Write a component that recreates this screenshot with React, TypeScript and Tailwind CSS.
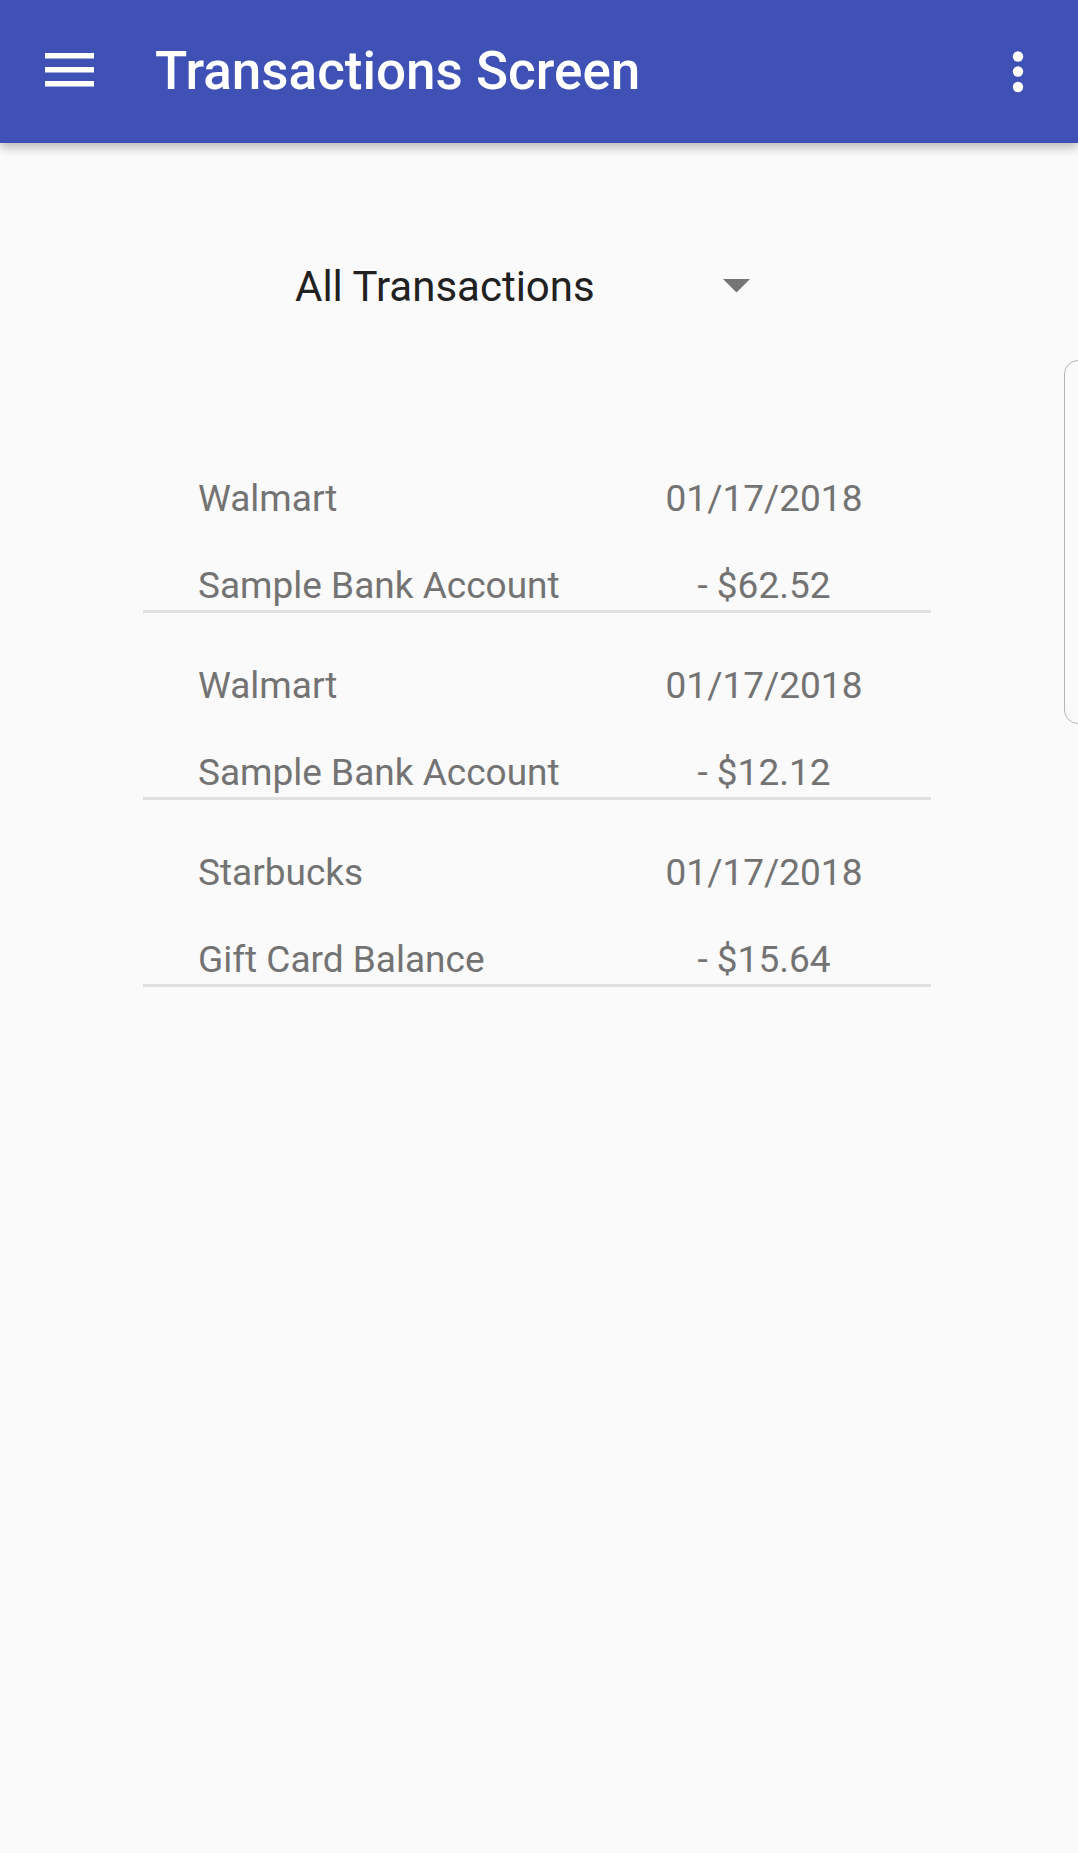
import React from 'react'

type Txn = {
  merchant: string
  date: string
  account: string
  amount: string
}

const transactions: Txn[] = [
  { merchant: 'Walmart', date: '01/17/2018', account: 'Sample Bank Account', amount: '- $62.52' },
  { merchant: 'Walmart', date: '01/17/2018', account: 'Sample Bank Account', amount: '- $12.12' },
  { merchant: 'Starbucks', date: '01/17/2018', account: 'Gift Card Balance', amount: '- $15.64' },
]

function MenuIcon() {
  return (
    <svg width="50" height="34" viewBox="0 0 50 34" className="block">
      <rect x="0" y="0" width="49" height="5.5" fill="#fff" />
      <rect x="0" y="14" width="49" height="5.5" fill="#fff" />
      <rect x="0" y="28" width="49" height="5.5" fill="#fff" />
    </svg>
  )
}

function MoreIcon() {
  return (
    <svg width="12" height="42" viewBox="0 0 12 42" className="block">
      <circle cx="6" cy="5.5" r="5.2" fill="#fff" />
      <circle cx="6" cy="20.5" r="5.2" fill="#fff" />
      <circle cx="6" cy="36" r="5.2" fill="#fff" />
    </svg>
  )
}

function TxnRow({ t }: { t: Txn }) {
  return (
    <div className="grid grid-cols-[1fr_240px] pl-[55px] pr-[47px] pt-[52px] pb-[3px] border-b-[3px] border-[#e0e0e0] text-[37px] leading-[42px] text-[#737373]">
      <div>{t.merchant}</div>
      <div className="text-center">{t.date}</div>
      <div className="mt-[45px]">{t.account}</div>
      <div className="mt-[45px] text-center">{t.amount}</div>
    </div>
  )
}

export default function App() {
  return (
    <div
      className="relative w-[1078px] h-[1853px] bg-[#fafafa] overflow-hidden"
      style={{ fontFamily: 'Roboto, "Noto Sans", sans-serif' }}
    >
      <header className="relative z-10 h-[143px] bg-[#3f51b5] flex items-center pl-[45px] pr-[54px] shadow-[0_4px_10px_rgba(0,0,0,0.28)]">
        <div className="-mt-[4px]">
          <MenuIcon />
        </div>
        <h1 className="ml-[60px] text-[53px] leading-[61px] font-medium text-white">
          Transactions Screen
        </h1>
        <div className="ml-auto">
          <MoreIcon />
        </div>
      </header>

      <div className="mt-[119px] h-[50px] flex items-center pl-[295px]">
        <span className="text-[42px] leading-[50px] text-[#212121]">All Transactions</span>
        <svg width="27" height="14" viewBox="0 0 27 14" className="ml-[128px] -mt-[2px]">
          <polygon points="0,0 27,0 13.5,13.5" fill="#757575" />
        </svg>
      </div>

      <div className="mt-[114px] ml-[143px] w-[788px]">
        {transactions.map((t, i) => (
          <TxnRow key={i} t={t} />
        ))}
      </div>

      {/* edge panel handle */}
      <div className="absolute left-[1064px] top-[360px] w-[40px] h-[364px] rounded-[14px] border-[1.5px] border-[#b5b5b5]" />
    </div>
  )
}
